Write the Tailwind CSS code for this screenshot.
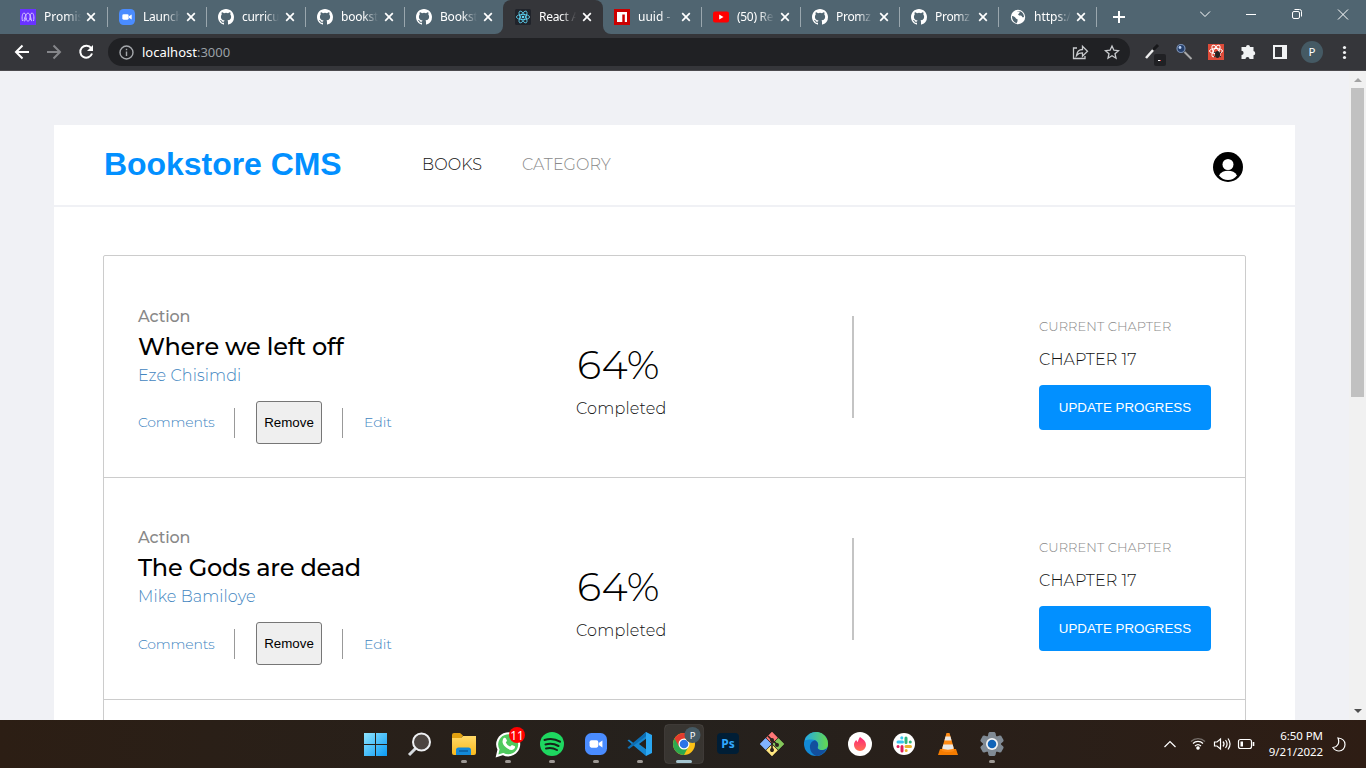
<!DOCTYPE html>
<html lang="en">
<head>
<meta charset="utf-8">
<title>Bookstore CMS</title>
<script src="https://cdn.jsdelivr.net/npm/@tailwindcss/browser@4"></script>
</head>
<body class="w-[1366px] h-[768px] overflow-hidden flex flex-col bg-[#f0f1f5] font-['Montserrat','Inter',sans-serif]">
<svg class="hidden">
  <symbol id="gh" viewBox="0 0 16 16"><path fill="#fff" d="M8 0C3.58 0 0 3.58 0 8c0 3.54 2.29 6.53 5.47 7.59.4.07.55-.17.55-.38 0-.19-.01-.82-.01-1.49-2.01.37-2.53-.49-2.69-.94-.09-.23-.48-.94-.82-1.13-.28-.15-.68-.52-.01-.53.63-.01 1.08.58 1.23.82.72 1.21 1.87.87 2.33.66.07-.52.28-.87.51-1.07-1.78-.2-3.64-.89-3.64-3.95 0-.87.31-1.59.82-2.15-.08-.2-.36-1.02.08-2.12 0 0 .67-.21 2.2.82a7.6 7.6 0 0 1 4 0c1.53-1.04 2.2-.82 2.2-.82.44 1.1.16 1.92.08 2.12.51.56.82 1.27.82 2.15 0 3.07-1.87 3.75-3.65 3.95.29.25.54.73.54 1.48 0 1.07-.01 1.93-.01 2.2 0 .21.15.46.55.38A8.01 8.01 0 0 0 16 8c0-4.42-3.58-8-8-8z"/></symbol>
  <symbol id="x" viewBox="0 0 10 10"><path d="M1.2 1.2l7.6 7.6M8.8 1.2L1.2 8.8" stroke="#fff" stroke-width="1.7"/></symbol>
  <symbol id="zoomcam" viewBox="0 0 24 24"><rect width="24" height="24" rx="7" fill="#4a8cff"/><rect x="5" y="8" width="9.5" height="8" rx="2" fill="#fff"/><path d="M15 11l4-2.8v7.6L15 13z" fill="#fff"/></symbol>
</svg>

<!-- Tab strip -->
<header class="h-[34px] shrink-0 bg-[#506571] flex pl-2 text-[12px] text-white font-['Noto_Sans',sans-serif]">
  <div class="w-[99px] flex items-center pl-3 relative"><svg class="w-4 h-4 shrink-0" viewBox="0 0 16 16"><rect width="16" height="16" fill="#6933ff"/><path d="M2.500 12C1.500 8 2.500 4 4 4s2 3 2 5-1 3-1.800 3S6 4 8 4s3.500 8 3.800 8S10 11 10 9s.500-5 2-5 2.500 4 1.500 8M6 9c0 2 1 3 2 3s2-1 2-3" fill="none" stroke="#d8c6ff" stroke-width="1"/></svg><span class="ml-2 w-[37px] whitespace-nowrap mask-r-from-60%">Promis</span><svg class="ml-[5px] w-[10px] h-[10px]"><use href="#x"/></svg><i class="absolute -right-px top-[7px] h-5 w-px bg-[#9aa7ae]"></i></div>
  <div class="w-[99px] flex items-center pl-3 relative"><svg class="w-4 h-4 shrink-0"><use href="#zoomcam"/></svg><span class="ml-2 w-[37px] whitespace-nowrap tracking-[-0.2px] mask-r-from-60%">Launch</span><svg class="ml-[6px] w-[10px] h-[10px]"><use href="#x"/></svg><i class="absolute -right-px top-[7px] h-5 w-px bg-[#9aa7ae]"></i></div>
  <div class="w-[99px] flex items-center pl-3 relative"><svg class="w-4 h-4 shrink-0"><use href="#gh"/></svg><span class="ml-2 w-[37px] whitespace-nowrap tracking-[-0.3px] mask-r-from-60%">curricu</span><svg class="ml-[6px] w-[10px] h-[10px]"><use href="#x"/></svg><i class="absolute -right-px top-[7px] h-5 w-px bg-[#9aa7ae]"></i></div>
  <div class="w-[99px] flex items-center pl-3 relative"><svg class="w-4 h-4 shrink-0"><use href="#gh"/></svg><span class="ml-2 w-[37px] whitespace-nowrap tracking-[-0.2px] mask-r-from-60%">bookst</span><svg class="ml-[6px] w-[10px] h-[10px]"><use href="#x"/></svg><i class="absolute -right-px top-[7px] h-5 w-px bg-[#9aa7ae]"></i></div>
  <div class="w-[99px] flex items-center pl-3"><svg class="w-4 h-4 shrink-0"><use href="#gh"/></svg><span class="ml-2 w-[37px] whitespace-nowrap tracking-[-0.2px] mask-r-from-60%">Bookst</span><svg class="ml-[6px] w-[10px] h-[10px]"><use href="#x"/></svg></div>
  <div class="w-[100px] -mr-px flex items-center pl-3 relative bg-[#35363a] rounded-t-lg">
    <svg class="absolute -left-2 bottom-0 w-2 h-2" viewBox="0 0 8 8"><path d="M8 0v8H0a8 8 0 0 0 8-8z" fill="#35363a"/></svg>
    <svg class="absolute -right-2 bottom-0 w-2 h-2" viewBox="0 0 8 8"><path d="M0 0v8h8a8 8 0 0 1-8-8z" fill="#35363a"/></svg>
    <svg class="w-4 h-4 shrink-0" viewBox="0 0 16 16"><rect width="16" height="16" rx="1.500" fill="#20232a"/><g fill="none" stroke="#61dafb" stroke-width=".8"><ellipse cx="8" cy="8" rx="6.600" ry="2.600"/><ellipse cx="8" cy="8" rx="6.600" ry="2.600" transform="rotate(60 8 8)"/><ellipse cx="8" cy="8" rx="6.600" ry="2.600" transform="rotate(120 8 8)"/></g><circle cx="8" cy="8" r="1.300" fill="#61dafb"/></svg><span class="ml-2 w-[37px] whitespace-nowrap tracking-[-0.3px] mask-r-from-60%">React A</span><svg class="ml-[6px] w-[10px] h-[10px]"><use href="#x"/></svg></div>
  <div class="w-[99px] flex items-center pl-3 relative"><svg class="w-4 h-4 shrink-0" viewBox="0 0 16 16"><rect width="16" height="16" fill="#c00"/><path d="M3 3h10v10h-2.200V5.500H8.300V13H3z" fill="#fff"/></svg><span class="ml-2 w-[37px] whitespace-nowrap mask-r-from-60%">uuid -</span><svg class="ml-[6px] w-[10px] h-[10px]"><use href="#x"/></svg><i class="absolute -right-px top-[7px] h-5 w-px bg-[#9aa7ae]"></i></div>
  <div class="w-[99px] flex items-center pl-3 relative"><svg class="w-4 h-4 shrink-0" viewBox="0 0 16 16"><rect y="2.500" width="16" height="11" rx="2" fill="#f00"/><path d="M6.200 5.600v4.800L10.500 8z" fill="#fff"/></svg><span class="ml-2 w-[37px] whitespace-nowrap tracking-[-0.3px] mask-r-from-60%">(50) Re</span><svg class="ml-[6px] w-[10px] h-[10px]"><use href="#x"/></svg><i class="absolute -right-px top-[7px] h-5 w-px bg-[#9aa7ae]"></i></div>
  <div class="w-[99px] flex items-center pl-3 relative"><svg class="w-4 h-4 shrink-0"><use href="#gh"/></svg><span class="ml-2 w-[37px] whitespace-nowrap tracking-[-0.3px] mask-r-from-60%">Promz</span><svg class="ml-[6px] w-[10px] h-[10px]"><use href="#x"/></svg><i class="absolute -right-px top-[7px] h-5 w-px bg-[#9aa7ae]"></i></div>
  <div class="w-[99px] flex items-center pl-3 relative"><svg class="w-4 h-4 shrink-0"><use href="#gh"/></svg><span class="ml-2 w-[37px] whitespace-nowrap tracking-[-0.3px] mask-r-from-60%">Promz</span><svg class="ml-[6px] w-[10px] h-[10px]"><use href="#x"/></svg><i class="absolute -right-px top-[7px] h-5 w-px bg-[#9aa7ae]"></i></div>
  <div class="w-[99px] flex items-center pl-3 relative"><svg class="w-4 h-4 shrink-0" viewBox="0 0 16 16"><circle cx="8" cy="8" r="7.200" fill="#fff"/><path d="M2 7c2 .5 3 .5 3.600 2s2 .5 2 2-.6 2.500-1 3.200C3.500 13.500 1.800 10.500 2 7zM7 2.200c2-.3 3 .3 2.500 1.500S7.500 5 8.500 6s3 .2 3.500 1.500 1.200.8 2 .5c0-3-2-5.500-5-6z" fill="#506571"/></svg><span class="ml-2 w-[37px] whitespace-nowrap mask-r-from-60%">https:/</span><svg class="ml-[5px] w-[10px] h-[10px]"><use href="#x"/></svg><i class="absolute right-0 top-[7px] h-5 w-px bg-[#9aa7ae]"></i></div>
  <svg class="ml-4 mt-[11px] w-3 h-3" viewBox="0 0 12 12"><path d="M6 0v12M0 6h12" stroke="#fff" stroke-width="2"/></svg>
  <svg class="ml-auto w-[166px] h-[34px]" viewBox="1200 0 166 34" fill="none" stroke="#fff"><path d="M1200 11.500l5 5 5-5M1246 14.500h10M1338 9.500l10 10M1348 9.500l-10 10"/><rect x="1292.500" y="11.500" width="7" height="7" rx="1.500"/><path d="M1294.500 9.500h5a2 2 0 0 1 2 2v5"/></svg>
</header>

<!-- Address bar -->
<div class="h-[37px] shrink-0 bg-[#35363a] border-b border-[#4b4a4e] flex items-center font-['Noto_Sans',sans-serif]">
  <svg class="w-[108px] h-9" viewBox="0 34 108 36" fill="none" stroke="#fff" stroke-width="2"><path d="M29 52H16.500M22.500 45.500L16 52l6.500 6.500"/><path stroke="#85868a" d="M47 52h12.500M53.500 45.500L60 52l-6.500 6.500"/><path d="M91.200 48.200A6 6 0 1 0 92 53.500"/><path d="M93 45v6h-6z" fill="#fff" stroke="none"/></svg>
  <div class="w-[1022px] h-7 rounded-full bg-[#202124] flex items-center pl-[11px] pr-[10px] text-[13px] text-white">
    <svg class="w-[15px] h-[15px]" viewBox="0 0 15 15" fill="none" stroke="#a5a8ac" stroke-width="1.400"><circle cx="7.500" cy="7.500" r="6.500"/><path d="M7.500 6.500V11M7.500 3.800v1.500"/></svg>
    <span class="ml-2 mt-px">localhost<span class="text-[#9aa0a6]">:3000</span></span>
    <svg class="ml-auto w-[50px] h-6" viewBox="1070 40 50 24" fill="none" stroke="#c9cbce" stroke-width="1.300"><path d="M1077 48h-3.500v10.500h11.500V56M1076.500 55.500c.5-4 3-6 6-6v-3.300l5 5-5 5v-3.300c-3 0-4.500.6-6 2.600z"/><path d="M1112 46l1.900 4.200 4.600.5-3.500 3 1 4.500-4-2.400-4 2.400 1-4.500-3.500-3 4.600-.5z"/></svg>
  </div>
  <svg class="w-[236px] h-9" viewBox="1130 34 236 36">
    <path d="M1146 58l8-9" stroke="#eee" stroke-width="2.500"/><path d="M1153 50l5-5" stroke="#17181a" stroke-width="3"/><rect x="1154" y="54" width="12" height="12" rx="2" fill="#202124"/><path d="M1158 60.500h2" stroke="#fff"/><path d="M1160 60.500h1" stroke="#e44"/>
    <path d="M1184.500 52l7 7" stroke="#a9a9a9" stroke-width="2"/><circle cx="1181" cy="48.500" r="4" fill="#25406d" stroke="#7a90b3" stroke-width="1.200"/><circle cx="1180" cy="47.500" r="1.400" fill="#bcd2f5"/>
    <rect x="1208" y="44" width="16" height="16" fill="#dd4b39"/><g fill="none" stroke="#fff" stroke-width="1"><ellipse cx="1216" cy="51" rx="6.500" ry="2.500"/><ellipse cx="1216" cy="51" rx="6.500" ry="2.500" transform="rotate(60 1216 51)"/><ellipse cx="1216" cy="51" rx="6.500" ry="2.500" transform="rotate(120 1216 51)"/></g><ellipse cx="1217.500" cy="54.500" rx="2.500" ry="3.500" fill="#222"/><path d="M1214 52l7 5M1221 52l-7 5" stroke="#222"/>
    <path d="M1246 47a2 2 0 0 1 4 0h3.500v4a2.200 2.200 0 0 1 0 4.300V59h-4a2 2 0 0 0-4 0h-4v-4a2 2 0 0 0 0-4.200V47z" fill="#f1f3f4"/>
    <path d="M1273 45h14v14h-14z" fill="#f1f3f4"/><rect x="1275" y="47" width="7" height="10" fill="#35363a"/>
    <circle cx="1312" cy="52" r="11" fill="#455a64"/><text x="1312" y="56" font-size="11.500" fill="#fff" text-anchor="middle" font-family="Noto Sans">P</text>
    <g fill="#f1f3f4"><circle cx="1344.500" cy="47.500" r="1.600"/><circle cx="1344.500" cy="52.500" r="1.600"/><circle cx="1344.500" cy="57.500" r="1.600"/></g>
  </svg>
</div>

<!-- Page -->
<div class="h-[649px] shrink-0 flex overflow-hidden">
  <div class="flex-1 pl-[54px] pt-[54px]">
    <main class="w-[1241px] h-[595px] bg-white overflow-hidden">
      <nav class="h-[82px] border-b-2 border-[#f0f1f5] flex items-center pl-[50px] pr-[52px]">
        <h1 class="w-[318px] text-[32px] leading-[36px] tracking-[-0.05px] -mt-[3px] font-bold text-[#0290ff] font-['Liberation_Sans',sans-serif]">Bookstore CMS</h1>
        <a class="w-[100px] text-[16px] tracking-[0.1px] font-light text-[#121212]">BOOKS</a>
        <a class="text-[16px] tracking-[0.05px] font-light text-[#8a8a8a]">CATEGORY</a>
        <svg class="ml-auto mt-1 w-[30px] h-[30px]" viewBox="0 0 30 30"><circle cx="15" cy="15" r="15"/><circle cx="15" cy="12.500" r="5.500" fill="#fff"/><path d="M6 23.500c2-3.500 5-4.800 9-4.800s7 1.300 9 4.800c-2.500 3-5.500 4.500-9 4.500s-6.500-1.500-9-4.500z" fill="#fff"/></svg>
      </nav>
      <section class="mx-[49px] mt-12 h-[520px] border border-[#ccc] rounded-[2px]">
        <article class="h-[222px] border-b border-[#ccc] flex pl-[34px]">
          <div class="w-[439px] pt-[51px]">
            <p class="text-[16px] leading-5 tracking-[-0.1px] font-medium text-[#888]">Action</p>
            <h2 class="mt-1 text-[24px] leading-[32px] tracking-[-0.22px] font-medium text-black">Where we left off</h2>
            <p class="mt-[3px] text-[16px] leading-5 tracking-[0.1px] font-light text-[#4386bf]">Eze Chisimdi</p>
            <div class="mt-[15px] h-[43px] flex items-center text-[14px] text-[#4386bf] font-light">
              <span class="w-24 tracking-[-0.18px]">Comments</span><i class="w-px h-[30px] bg-[#999]"></i>
              <button class="ml-[21px] w-[66px] h-[43px] rounded-[3px] border border-[#767676] bg-[#efefef] text-black font-normal text-[13.333px] font-['Liberation_Sans',sans-serif]">Remove</button>
              <i class="ml-5 w-px h-[30px] bg-[#999]"></i><span class="ml-[21px]">Edit</span>
            </div>
          </div>
          <div class="w-[275px] pt-[85px]"><p class="text-[40px] leading-[48px] tracking-[0.3px] font-light text-black">64%</p><p class="-ml-px mt-[10px] text-[16px] leading-5 tracking-[0.2px] font-light text-[#121212]">Completed</p></div>
          <i class="mt-[60px] w-[2px] h-[102px] bg-[#c4c4c4]"></i>
          <div class="ml-[185px] pt-[60px]"><p class="text-[13px] leading-5 tracking-[0.07px] font-light text-[#888]">CURRENT CHAPTER</p><p class="mt-[14px] text-[16px] leading-5 tracking-[0.1px] font-light text-[#121212]">CHAPTER 17</p><button class="mt-[15px] w-[172px] h-[45px] rounded bg-[#0290ff] text-white text-[13.333px] font-['Liberation_Sans',sans-serif]">UPDATE PROGRESS</button></div>
        </article>
        <article class="h-[222px] border-b border-[#ccc] flex pl-[34px]">
          <div class="w-[439px] pt-[50px]">
            <p class="text-[16px] leading-5 tracking-[-0.1px] font-medium text-[#888]">Action</p>
            <h2 class="mt-1 text-[24px] leading-[32px] tracking-[-0.22px] font-medium text-black">The Gods are dead</h2>
            <p class="mt-[3px] text-[16px] leading-5 tracking-[0.1px] font-light text-[#4386bf]">Mike Bamiloye</p>
            <div class="mt-[15px] h-[43px] flex items-center text-[14px] text-[#4386bf] font-light">
              <span class="w-24 mt-px tracking-[-0.18px]">Comments</span><i class="w-px h-[30px] bg-[#999]"></i>
              <button class="ml-[21px] w-[66px] h-[43px] rounded-[3px] border border-[#767676] bg-[#efefef] text-black font-normal text-[13.333px] font-['Liberation_Sans',sans-serif]">Remove</button>
              <i class="ml-5 w-px h-[30px] bg-[#999]"></i><span class="ml-[21px] mt-px">Edit</span>
            </div>
          </div>
          <div class="w-[275px] pt-[85px]"><p class="text-[40px] leading-[48px] tracking-[0.3px] font-light text-black">64%</p><p class="-ml-px mt-[10px] text-[16px] leading-5 tracking-[0.2px] font-light text-[#121212]">Completed</p></div>
          <i class="mt-[60px] w-[2px] h-[102px] bg-[#c4c4c4]"></i>
          <div class="ml-[185px] pt-[59px]"><p class="text-[13px] leading-5 tracking-[0.07px] font-light text-[#888]">CURRENT CHAPTER</p><p class="mt-[14px] text-[16px] leading-5 tracking-[0.1px] font-light text-[#121212]">CHAPTER 17</p><button class="mt-[15px] w-[172px] h-[45px] rounded bg-[#0290ff] text-white text-[13.333px] font-['Liberation_Sans',sans-serif]">UPDATE PROGRESS</button></div>
        </article>
      </section>
    </main>
  </div>
  <aside class="w-[17px] bg-[#f1f1f1] flex flex-col items-center justify-between py-[7px]">
    <div class="flex flex-col items-center"><svg class="w-2 h-[4px]" viewBox="0 0 8 4"><path d="M0 4l4-4 4 4z" fill="#a3a3a3"/></svg><i class="mt-[6px] w-[13px] h-[309px] bg-[#c1c1c1]"></i></div>
    <svg class="w-2 h-[4px]" viewBox="0 0 8 4"><path d="M0 0l4 4 4-4z" fill="#505050"/></svg>
  </aside>
</div>

<!-- Taskbar -->
<footer class="h-12 shrink-0 bg-linear-to-r from-[#2c1e14] via-[#25211d] to-[#2e1d14] flex items-center pl-[354px] text-white font-['Noto_Sans',sans-serif]">
  <svg class="w-[660px] h-12 shrink-0" viewBox="354 720 660 48">
    <defs>
      <linearGradient id="win" x1="0" y1="0" x2="1" y2="1"><stop stop-color="#8ee4ff"/><stop offset="1" stop-color="#0a9bf5"/></linearGradient>
      <linearGradient id="fold" x1="0" y1="0" x2="0" y2="1"><stop stop-color="#ffd968"/><stop offset="1" stop-color="#f9b91c"/></linearGradient>
      <linearGradient id="edge" x1="0" y1="0" x2="1" y2="0"><stop stop-color="#22a7e8"/><stop offset="1" stop-color="#65d94c"/></linearGradient>
      <linearGradient id="flame" x1="0" y1="0" x2="0" y2="1"><stop stop-color="#fd267a"/><stop offset="1" stop-color="#ff7051"/></linearGradient>
    </defs>
    <path fill="url(#win)" d="M364 733h11v11h-11zM376 733h11v11h-11zM364 745h11v11h-11zM376 745h11v11h-11z"/>
    <path d="M415.500 748.500l-6.500 6.500" stroke="#d6dade" stroke-width="3"/><circle cx="421.500" cy="742" r="8.500" fill="#4c4541" stroke="#eef0f2" stroke-width="2"/>
    <path d="M452 735a2 2 0 0 1 2-2h6l3 2.500-3 4h-8z" fill="#e0a010"/><path d="M452 738h9l2-2h13v17a2 2 0 0 1-2 2h-20a2 2 0 0 1-2-2z" fill="url(#fold)"/><path d="M456 755v-5a2.500 2.500 0 0 1 2.500-2.500h10a2.500 2.500 0 0 1 2.500 2.500v5z" fill="#1389d8"/><path d="M459 751h9" stroke="#0b5c9e" stroke-width="1.500"/>
    <path d="M497 756l1.500-6.500A11 11 0 1 1 503 754z" fill="#4fca5e" stroke="#fff" stroke-width="2"/><path d="M503 739c1-2 2.500-1.500 3-.5l1 2.300-1.200 1.700c1 2 2.500 3.200 4.400 4l1.700-1.600 3 1.400c.8 1-1 3.700-3.500 3.700-4.500-.5-9-5-8.900-8.500z" fill="#fff"/>
    <circle cx="517" cy="735" r="8" fill="#f00"/><text x="517" y="739.500" font-size="12" fill="#fff" text-anchor="middle">11</text>
    <circle cx="552" cy="744" r="12" fill="#1ed760"/><path d="M544.500 740c5-1.500 11-1 15.500 1.700M545.500 744.500c4-1.200 9-.7 13 1.500M546 748.500c4-1 7.500-.5 11 1.500" stroke="#16241a" stroke-width="2" stroke-linecap="round" fill="none"/>
    <use href="#zoomcam" x="585" y="733" width="22" height="22"/>
    <path d="M646 732l-12 11.500-5-4-1.500 1L646 756l1-6-8-6 8-6z" fill="#1686cf"/><path d="M627.500 747.500l1.500 1.500 18-13.500-1-3.500z" fill="#0d6eb3"/><path d="M646 732l6 3v18l-6 3z" fill="#2aa7f2"/>
    <rect x="664.500" y="724.500" width="39" height="39" rx="4" fill="#fff" fill-opacity=".09" stroke="#fff" stroke-opacity=".08"/>
    <circle cx="684" cy="744" r="11" fill="#fbc116"/><path d="M674.500 738.500A11 11 0 0 0 684 755l4.500-8.500L684 744z" fill="#2da94f"/><path d="M674.500 738.500A11 11 0 0 1 693.500 738.500H684l-5 8z" fill="#e33b2e"/><circle cx="684" cy="744" r="5.500" fill="#fff"/><circle cx="684" cy="744" r="4.300" fill="#2b74e8"/>
    <circle cx="692.500" cy="735" r="8" fill="#455a64"/><text x="692.500" y="738.500" font-size="9.500" fill="#fff" text-anchor="middle">P</text>
    <rect x="717" y="733" width="22" height="21" rx="4" fill="#001e36"/><text x="728" y="748" font-size="12" font-weight="bold" fill="#31a8ff" text-anchor="middle">Ps</text>
    <g transform="rotate(45 772 744)"><rect x="763.500" y="735.500" width="8" height="8" fill="#f77"/><rect x="772.500" y="735.500" width="8" height="8" fill="#83c65a"/><rect x="763.500" y="744.500" width="8" height="8" fill="#80b3ff"/><rect x="772.500" y="744.500" width="8" height="8" fill="#ffe680"/></g>
    <g transform="rotate(45 772 744)"><rect x="763.500" y="735.500" width="8" height="8" fill="#f77"/><rect x="772.500" y="735.500" width="8" height="8" fill="#83c65a"/><rect x="763.500" y="744.500" width="8" height="8" fill="#80b3ff"/><rect x="772.500" y="744.500" width="8" height="8" fill="#ffe680"/></g><path d="M768 736l4 4v12M772 740l6 5" stroke="#2b211d" stroke-width="1.600" fill="none"/><g fill="#2b211d"><circle cx="772" cy="740" r="2"/><circle cx="777" cy="745" r="2"/><circle cx="772" cy="750" r="2"/></g>
    <circle cx="816" cy="744" r="12" fill="#1289d6"/><path d="M804.500 740.500A12 12 0 0 1 828 744c0 4-3 6-6.500 6-3 0-4.500-1.500-3.500-3 1.500-4-2-7.500-6-7.500-3.500 0-6 .5-7.500 1z" fill="url(#edge)"/><path d="M810 748c-.5-3.500 1.500-7 5-7.700 2.300 1 3.500 3 3 5.700-1 2 0 4 4 4 2 0 3-.5 4.500-1.300C824 753.500 820 756 816 756c-3.500-1.500-5.700-4.500-6-8z" fill="#124f9e"/>
    <circle cx="860" cy="744" r="12" fill="#fff"/><path d="M860 737c4 2.500 6 5 6 8a6 6 0 0 1-12 0c0-2 .8-3.700 2.300-5 .3 1 .8 1.700 1.500 2 .5-2 1.200-4 2.200-5z" fill="url(#flame)"/>
    <circle cx="904" cy="744" r="11" fill="#fff"/><g stroke-width="3" stroke-linecap="round"><path d="M898 742h4.500M901.800 737.800v.1" stroke="#36c5f0"/><path d="M906 738v4.500M910.200 742h.1" stroke="#2eb67d"/><path d="M906 746.500h4.500M906.200 750.500v.1" stroke="#ecb22e"/><path d="M902 746.500v4.500M898 746.500h.1" stroke="#e01e5a"/></g>
    <path d="M940 749h16l2 6h-20z" fill="#f57c00"/><path d="M946.500 733h3l5 17.500c-3 2-10 2-13 0z" fill="#ff8b14"/><path d="M945.500 736.500h5l1 4h-7zM943.300 744.500h9.400l1 4c-3 1.500-8.500 1.500-11.400 0z" fill="#e9e9e9"/>
    <g fill="#808a94"><circle cx="992" cy="744" r="9"/><path id="tooth" d="M988.500 733l1-1h5l1 1 1 5h-9zM987.500 750h9l-1 5-1 1h-5l-1-1z"/><use href="#tooth" transform="rotate(60 992 744)"/><use href="#tooth" transform="rotate(120 992 744)"/></g><circle cx="992" cy="744" r="6" fill="#f4f4f4"/><circle cx="992" cy="744" r="4.300" fill="#1164b8"/>
    <g fill="#9d9894"><rect x="461" y="760" width="6" height="3" rx="1.500"/><rect x="505" y="760" width="6" height="3" rx="1.500"/><rect x="549" y="760" width="6" height="3" rx="1.500"/><rect x="593" y="760" width="6" height="3" rx="1.500"/><rect x="637" y="760" width="6" height="3" rx="1.500"/><rect x="989" y="760" width="6" height="3" rx="1.500"/></g><rect x="676" y="760" width="16" height="3" rx="1.500" fill="#a5c5d0"/>
  </svg>
  <svg class="ml-auto w-[100px] h-12" viewBox="1160 720 100 48" fill="none" stroke="#fff" stroke-width="1.200"><path d="M1164.500 747l5.500-5.500 5.500 5.500"/><path d="M1191 741.500a10 10 0 0 1 14 0" stroke="#77706b"/><path d="M1193 743.500a7 7 0 0 1 10 0M1195 746a4.500 4.500 0 0 1 6 0"/><circle cx="1198" cy="748" r="1.200" fill="#fff"/><path d="M1214.500 742h2.500l3.500-3v10l-3.500-3h-2.500zM1223 741.500c1.300 1.500 1.300 3.500 0 5M1225.500 740c2 2.500 2 5.500 0 8M1228 738.500c2.600 3.500 2.600 7.500 0 11"/><rect x="1238.500" y="739.500" width="13" height="9" rx="2"/><path d="M1253.500 742v4" stroke-width="1.600"/><path d="M1240.500 741.500h2.500v5h-2.500z" fill="#fff" stroke="none"/></svg>
  <div class="w-[63px] text-right text-[11.500px] leading-4 tracking-[-0.05px]"><div>6:50 PM</div><div>9/21/2022</div></div>
  <svg class="ml-[9px] mr-[20px] w-[14px] h-[15px]" viewBox="0 0 14 15" fill="none" stroke="#fff" stroke-width="1.200"><path d="M6 1c5 .5 7 3 7 6.500C13 11 10.500 14 7 14c-2.500 0-4.500-1.200-6-3.500C5.500 10 8 6 6 1z"/></svg>
</footer>
</body>
</html>
